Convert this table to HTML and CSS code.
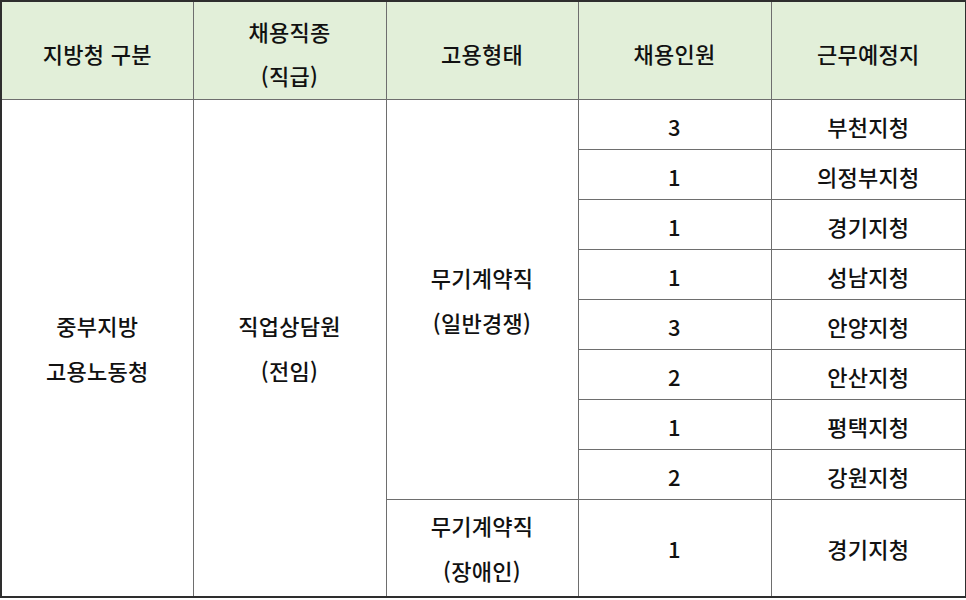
FILE: index.html
```html
<!DOCTYPE html>
<html lang="ko">
<head>
<meta charset="utf-8">
<link rel="stylesheet" href="styles.css">
</head>
<body>
<table class="grid">
  <colgroup>
    <col class="c1"><col class="c2"><col class="c3"><col class="c4"><col class="c5">
  </colgroup>
  <thead>
    <tr class="head">
      <th>지방청 구분</th>
      <th>채용직종<br>(직급)</th>
      <th>고용형태</th>
      <th>채용인원</th>
      <th>근무예정지</th>
    </tr>
  </thead>
  <tbody>
    <tr class="row">
      <td rowspan="9">중부지방<br>고용노동청</td>
      <td rowspan="9">직업상담원<br>(전임)</td>
      <td rowspan="8">무기계약직<br>(일반경쟁)</td>
      <td>3</td><td>부천지청</td>
    </tr>
    <tr class="row"><td>1</td><td>의정부지청</td></tr>
    <tr class="row"><td>1</td><td>경기지청</td></tr>
    <tr class="row"><td>1</td><td>성남지청</td></tr>
    <tr class="row"><td>3</td><td>안양지청</td></tr>
    <tr class="row"><td>2</td><td>안산지청</td></tr>
    <tr class="row"><td>1</td><td>평택지청</td></tr>
    <tr class="row"><td>2</td><td>강원지청</td></tr>
    <tr class="last">
      <td>무기계약직<br>(장애인)</td>
      <td>1</td><td>경기지청</td>
    </tr>
  </tbody>
</table>
</body>
</html>
```
FILE: styles.css
```css
html, body {
  margin: 0;
  padding: 0;
  background: #ffffff;
}
.grid {
  border-collapse: collapse;
  width: 965px;
  table-layout: fixed;
  border: 2px solid #2e2e2e;
  font-family: "Noto Sans CJK KR", "Malgun Gothic", sans-serif;
  font-size: 22px;
  letter-spacing: 0.3px;
  color: #111111;
}
.c1 { width: 192px; }
.c2 { width: 193px; }
.c3 { width: 192px; }
.c4 { width: 193px; }
.c5 { width: 195px; }
.grid th, .grid td {
  border: 1px solid #6e6e6e;
  text-align: center;
  vertical-align: middle;
  padding: 0;
  line-height: 44px;
  font-weight: 500;
}
.head th {
  background: #e2efd9;
  height: 93px;
  padding-top: 4px;
}
.row td {
  height: 47px;
  line-height: 26px;
  padding-top: 2px;
}
.row td[rowspan] {
  line-height: 45px;
  padding-top: 0;
}
.last td {
  height: 96px;
  line-height: 45px;
}
```
